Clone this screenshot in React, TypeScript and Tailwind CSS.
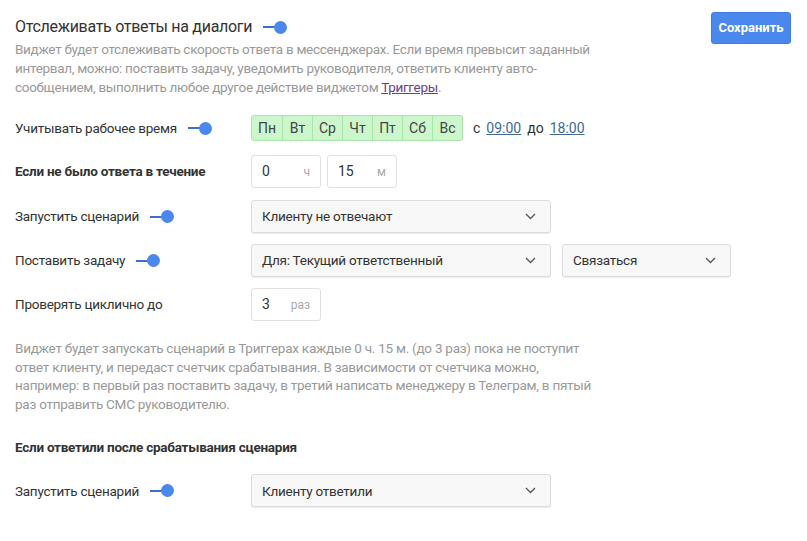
import React from 'react';

const font = { fontFamily: 'Roboto, "Noto Sans", sans-serif' };

const Toggle = () => (
  <span className="inline-flex items-center ml-[11px]">
    <span className="w-[12px] h-[2px] bg-[#3d6fcf]" />
    <span className="w-[13px] h-[13px] rounded-full bg-[#4a88ee] -ml-[1px]" />
  </span>
);

const Chevron = () => (
  <svg width="11" height="7" viewBox="0 0 11 7" className="text-[#555]">
    <polyline points="1,1 5.5,5.5 10,1" fill="none" stroke="currentColor" strokeWidth="1.3" />
  </svg>
);

const Select = ({ value, width }: { value: string; width: string }) => (
  <div
    className={`${width} h-[33px] flex items-center justify-between pl-[10px] pr-[14px] bg-[#f8f8f8] border border-[#dcdcdc] rounded-[3px] shadow-[0_1px_1px_rgba(0,0,0,0.08)] text-[13.5px] tracking-[-0.25px] text-[#333]`}
  >
    <span>{value}</span>
    <Chevron />
  </div>
);

const UnitInput = ({ value, unit }: { value: string; unit: string }) => (
  <div className="w-[70px] h-[33px] flex items-center justify-between pl-[10px] pr-[10px] bg-white border border-[#e0e0e0] rounded-[3px] text-[14px]">
    <span className="text-[#333]">{value}</span>
    <span className="text-[12px] text-[#aaa]">{unit}</span>
  </div>
);

const Label = ({ children }: { children: React.ReactNode }) => (
  <div className="w-[236px] flex items-center text-[13.5px] tracking-[-0.25px] text-[#333] shrink-0">{children}</div>
);

const days = ['Пн', 'Вт', 'Ср', 'Чт', 'Пт', 'Сб', 'Вс'];

export default function App() {
  return (
    <div className="w-[807px] h-[541px] bg-white pl-[15px] pr-[16px] pt-[12px] overflow-hidden" style={font}>
      {/* Header */}
      <div className="flex justify-between items-start">
        <div className="pt-[5px]">
          <div className="flex items-center h-[20px] text-[16px] tracking-[-0.3px] text-[#333]">
            Отслеживать ответы на диалоги
            <Toggle />
          </div>
        </div>
        <button className="w-[80px] h-[32px] rounded-[3px] bg-[#4a88ee] text-white text-[13px] font-bold border border-[#3f7be0]">
          Сохранить
        </button>
      </div>
      <p className="mt-[-4px] text-[13.5px] tracking-[-0.3px] leading-[19px] text-[#999] whitespace-nowrap">
        Виджет будет отслеживать скорость ответа в мессенджерах. Если время превысит заданный
        <br />
        интервал, можно: поставить задачу, уведомить руководителя, ответить клиенту авто-
        <br />
        сообщением, выполнить любое другое действие виджетом{' '}
        <span className="text-[#6a3e8e] underline">Триггеры</span>.
      </p>

      {/* Working hours */}
      <div className="flex mt-[18px] h-[26px]">
        <Label>
          Учитывать рабочее время
          <Toggle />
        </Label>
        <div className="flex items-center">
          <div className="flex h-[26px] border border-[#a9e5a9] rounded-[3px] bg-[#ccf7cc] overflow-hidden">
            {days.map((d, i) => (
              <div
                key={d}
                className={`w-[30px] flex items-center justify-center text-[14px] text-[#444] ${i > 0 ? 'border-l border-[#a9e5a9]' : ''}`}
              >
                {d}
              </div>
            ))}
          </div>
          <span className="ml-[10px] text-[14px] text-[#333]">с</span>
          <span className="ml-[6px] text-[14px] text-[#3f6a96] underline">09:00</span>
          <span className="ml-[6px] text-[14px] text-[#333]">до</span>
          <span className="ml-[6px] text-[14px] text-[#3f6a96] underline">18:00</span>
        </div>
      </div>

      {/* No reply within */}
      <div className="flex mt-[14px]">
        <Label>
          <span className="font-bold">Если не было ответа в течение</span>
        </Label>
        <div className="flex gap-[6px]">
          <UnitInput value="0" unit="ч" />
          <UnitInput value="15" unit="м" />
        </div>
      </div>

      <div className="flex mt-[12px]">
        <Label>
          Запустить сценарий
          <Toggle />
        </Label>
        <Select value="Клиенту не отвечают" width="w-[300px]" />
      </div>

      <div className="flex mt-[11px]">
        <Label>
          Поставить задачу
          <Toggle />
        </Label>
        <div className="flex gap-[11px]">
          <Select value="Для: Текущий ответственный" width="w-[300px]" />
          <Select value="Связаться" width="w-[169px]" />
        </div>
      </div>

      <div className="flex mt-[11px]">
        <Label>Проверять циклично до</Label>
        <UnitInput value="3" unit="раз" />
      </div>

      <p className="mt-[18px] text-[13.5px] tracking-[-0.25px] leading-[18.5px] text-[#999] whitespace-nowrap">
        Виджет будет запускать сценарий в Триггерах каждые 0 ч. 15 м. (до 3 раз) пока не поступит
        <br />
        ответ клиенту, и передаст счетчик срабатывания. В зависимости от счетчика можно,
        <br />
        например: в первый раз поставить задачу, в третий написать менеджеру в Телеграм, в пятый
        <br />
        раз отправить СМС руководителю.
      </p>

      <div className="mt-[24px] text-[13.5px] tracking-[-0.25px] font-bold text-[#333]">
        Если ответили после срабатывания сценария
      </div>

      <div className="flex mt-[17px]">
        <Label>
          Запустить сценарий
          <Toggle />
        </Label>
        <Select value="Клиенту ответили" width="w-[300px]" />
      </div>
    </div>
  );
}
